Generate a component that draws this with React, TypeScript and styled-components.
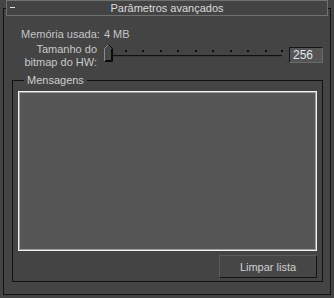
import React from "react";
import styled, { createGlobalStyle } from "styled-components";

const GlobalStyle = createGlobalStyle`
  html, body {
    margin: 0;
    padding: 0;
    background: #444444;
  }
  body {
    font-family: "Liberation Sans", Arial, sans-serif;
    font-size: 11px;
    color: #c8c8c8;
  }
`;

const Page = styled.div`
  width: 334px;
  height: 298px;
  padding-top: 8px;
  box-sizing: border-box;
  overflow: hidden;
`;

const Rollout = styled.div`
  margin: 0 3px 0 3px;
  width: 328px;
  height: 287px;
  box-sizing: border-box;
  border: 1px solid #121212;
  display: flex;
  flex-direction: column;
`;

const TitleBar = styled.div`
  position: relative;
  margin: -9px 2px 0 2px;
  height: 16px;
  box-sizing: border-box;
  border: 1px solid #707070;
  background: #444444;
  display: flex;
  align-items: center;
  justify-content: center;
  color: #dcdcdc;
  font-size: 11px;
  .toggle {
    position: absolute;
    left: 3px;
    top: 6px;
    width: 5px;
    height: 1px;
    background: #e0e0e0;
  }
`;

const Body = styled.div`
  display: flex;
  flex-direction: column;
  padding: 0 7px 0 8px;
`;

const MemoryRow = styled.div`
  display: flex;
  gap: 4px;
  margin: 12px 0 0 9px;
  height: 13px;
  line-height: 13px;
  color: #c4c4c4;
`;

const SliderRow = styled.div`
  display: flex;
  align-items: flex-start;
  margin-top: 2px;
  height: 28px;
`;

const SliderLabel = styled.div`
  width: 85px;
  text-align: right;
  line-height: 13px;
  color: #c8c8c8;
`;

const Slider = styled.div`
  position: relative;
  margin: 0 0 0 7px;
  width: 178px;
  height: 20px;
`;

const Track = styled.div`
  position: absolute;
  left: 8px;
  right: 0;
  top: 12px;
  height: 1px;
  background: #111;
  border-bottom: 1px solid #3a3a3a;
`;

const Tick = styled.div`
  position: absolute;
  top: 7px;
  width: 2px;
  height: 2px;
  background: #0c0c0c;
`;

const Thumb = styled.svg`
  position: absolute;
  left: 0;
  top: 1px;
`;

const ValueBox = styled.div`
  margin: 4px 0 0 7px;
  width: 34px;
  height: 16px;
  box-sizing: border-box;
  background: #555555;
  border-top: 1px solid #151515;
  border-left: 1px solid #151515;
  border-right: 1px solid #6a6a6a;
  border-bottom: 1px solid #6a6a6a;
  color: #dfe6f0;
  padding-left: 3px;
  line-height: 14px;
  font-size: 12px;
`;

const Group = styled.fieldset`
  margin: 3px 0 0 0;
  padding: 5px 5px 0 5px;
  height: 208px;
  box-sizing: border-box;
  border: 1px solid #121212;
  display: flex;
  flex-direction: column;
  align-items: stretch;
  legend {
    margin-left: 6px;
    padding: 0 3px;
    color: #cfcfcf;
    font-size: 11px;
    line-height: 12px;
  }
`;

const ListBox = styled.div`
  height: 160px;
  box-sizing: border-box;
  background: #565656;
  border: 1px solid #f2f2f2;
  box-shadow: inset 0 0 0 1px #9c9c9c;
`;

const Footer = styled.div`
  display: flex;
  justify-content: flex-end;
  margin-top: 4px;
`;

const Button = styled.button`
  width: 98px;
  height: 23px;
  box-sizing: border-box;
  background: #464646;
  border-top: 1px solid #5c5c5c;
  border-left: 1px solid #5c5c5c;
  border-right: 1px solid #141414;
  border-bottom: 1px solid #141414;
  color: #d0d0d0;
  font-family: "Liberation Sans", Arial, sans-serif;
  font-size: 11px;
  padding: 0;
`;

const SLIDER_LEFT = 104;
const tickPositions = [125, 142, 160, 177, 195, 212, 230, 247, 265, 281];

export default function App() {
  return (
    <>
      <GlobalStyle />
      <Page>
        <Rollout>
          <TitleBar>
            <span className="toggle" />
            Parâmetros avançados
          </TitleBar>
          <Body>
            <MemoryRow>
              <span>Memória usada:</span>
              <span>4 MB</span>
            </MemoryRow>
            <SliderRow>
              <SliderLabel>
                Tamanho do
                <br />
                bitmap do HW:
              </SliderLabel>
              <Slider>
                {tickPositions.map((x) => (
                  <Tick key={x} style={{ left: x - SLIDER_LEFT }} />
                ))}
                <Track />
                <Thumb width="9" height="18" viewBox="0 0 9 18">
                  <path d="M0.5 17.5 V4.5 L4.5 0.5 L8.5 4.5 V17.5 Z" fill="#474747" />
                  <path d="M0.5 17.5 V4.5 L4.5 0.5" fill="none" stroke="#8a8a8a" />
                  <path d="M4.5 0.5 L8.5 4.5 V17.5 H0.5" fill="none" stroke="#0a0a0a" />
                  <path d="M7.5 5 V16.5 H1.5" fill="none" stroke="#0a0a0a" />
                </Thumb>
              </Slider>
              <ValueBox>256</ValueBox>
            </SliderRow>
            <Group>
              <legend>Mensagens</legend>
              <ListBox />
              <Footer>
                <Button>Limpar lista</Button>
              </Footer>
            </Group>
          </Body>
        </Rollout>
      </Page>
    </>
  );
}
